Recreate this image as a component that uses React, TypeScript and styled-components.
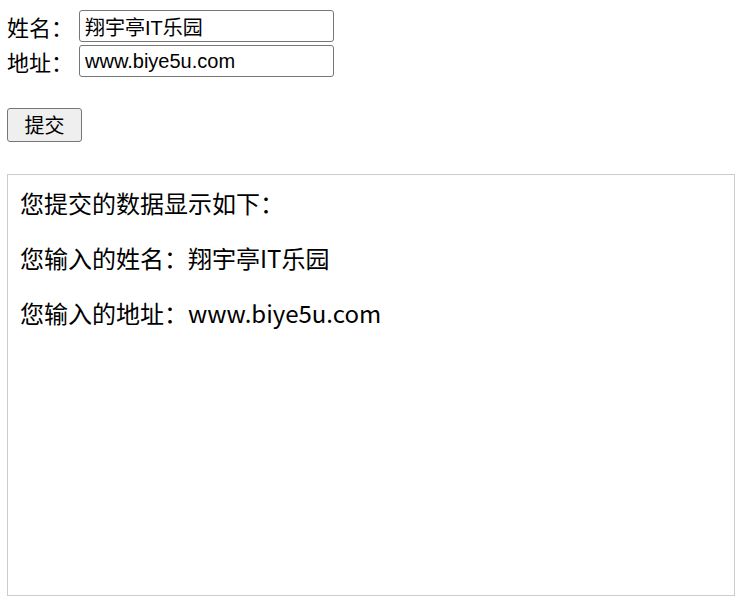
import React from 'react';
import styled, { createGlobalStyle } from 'styled-components';

const GlobalStyle = createGlobalStyle`
  body {
    margin: 0;
    background: #fff;
    color: #000;
    font-family: "Noto Sans CJK SC", "Noto Sans", sans-serif;
  }
`;

const Page = styled.div`
  padding: 10px 7px 0 7px;
  display: flex;
  flex-direction: column;
  align-items: flex-start;
`;

const Form = styled.form`
  display: flex;
  flex-direction: column;
  gap: 3px;
`;

const Row = styled.label`
  display: flex;
  align-items: center;
  height: 32px;
`;

const Label = styled.span`
  width: 72px;
  font-size: 22px;
  line-height: 32px;
  white-space: nowrap;
`;

const Input = styled.input`
  box-sizing: border-box;
  width: 255px;
  height: 32px;
  padding: 0 5px;
  border: 1px solid #767676;
  border-radius: 3px;
  font-family: "Liberation Sans", "Noto Sans CJK SC", sans-serif;
  font-size: 20px;
  color: #000;
  background: #fff;
  outline: none;
`;

const Button = styled.button`
  box-sizing: border-box;
  margin-top: 31px;
  width: 75px;
  height: 34px;
  border: 1px solid #767676;
  border-radius: 3px;
  background: #efefef;
  font-family: "Noto Sans CJK SC", sans-serif;
  font-size: 20px;
  line-height: 1;
  color: #000;
  padding: 0;
`;

const Result = styled.div`
  box-sizing: border-box;
  margin-top: 32px;
  width: 728px;
  height: 422px;
  border: 1px solid #cccccc;
  padding: 12px 12px;
  display: flex;
  flex-direction: column;
  gap: 24px;
`;

const Line = styled.p`
  margin: 0;
  font-size: 24px;
  line-height: 31px;
  white-space: nowrap;
`;

const App: React.FC = () => {
  const [name, setName] = React.useState('翔宇亭IT乐园');
  const [address, setAddress] = React.useState('www.biye5u.com');

  return (
    <>
      <GlobalStyle />
      <Page>
        <Form onSubmit={e => e.preventDefault()}>
          <Row>
            <Label>姓名：</Label>
            <Input value={name} onChange={e => setName(e.target.value)} />
          </Row>
          <Row>
            <Label>地址：</Label>
            <Input value={address} onChange={e => setAddress(e.target.value)} />
          </Row>
        </Form>
        <Button type="button">提交</Button>
        <Result>
          <Line>您提交的数据显示如下：</Line>
          <Line>您输入的姓名：{name}</Line>
          <Line>您输入的地址：{address}</Line>
        </Result>
      </Page>
    </>
  );
};

export default App;
